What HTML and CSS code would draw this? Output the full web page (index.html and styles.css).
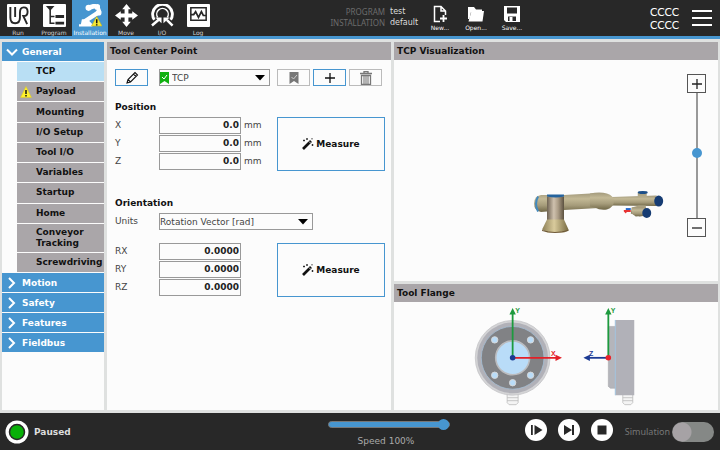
FILE: index.html
```html
<!DOCTYPE html>
<html lang="en">
<head>
<meta charset="utf-8">
<title>Installation - Tool Center Point</title>
<link rel="stylesheet" href="styles.css">
</head>
<body>
<header class="topbar">
  <nav class="tabs" aria-label="Main">
    <button class="tab"><svg class="tab-icon" viewBox="0 0 24 24"><rect width="24" height="24" rx="1" fill="#fff"/><path d="M3.500 3v11q0 6 5 6t5-6V9q0-5.500 4-5.500t4 4.500-4 4.500h-.5L21 21M8.500 3v10.500" fill="none" stroke="#282828" stroke-width="2"/></svg><span>Run</span></button>
    <button class="tab"><svg class="tab-icon" viewBox="0 0 24 24"><rect width="24" height="24" rx="1" fill="#fff"/><path d="M3 2h9L7.500 7z" fill="#282828"/><path d="M7.500 6v14H12M7.500 13H12" fill="none" stroke="#282828" stroke-width="1.600"/><path d="M13 11.500h9v3h-9zM13 18.500h9v3h-9z" fill="#282828"/></svg><span>Program</span></button>
    <button class="tab tab-active" aria-current="page"><svg class="tab-icon" viewBox="0 0 24 24"><path d="m10 4 8-2.500" stroke="#fff" stroke-width="5"/><path d="m19 2 2.500 6.500" stroke="#fff" stroke-width="4"/><path d="M20 9 6 18" stroke="#fff" stroke-width="4.500"/><circle cx="10" cy="4" r="3.200" fill="#fff"/><circle cx="19" cy="3" r="3" fill="#fff"/><circle cx="20.500" cy="9" r="3" fill="#fff"/><path d="M3 16h6l5 5v2.500H0V21h2z" fill="#fff"/><path d="M18.500 13 24 23H13z" fill="#f5e936" stroke="#c9b51b" stroke-width=".6"/><path d="M18.500 16v4M18.500 21v1.500" stroke="#111" stroke-width="1.600"/></svg><span>Installation</span></button>
    <button class="tab"><svg class="tab-icon" viewBox="0 0 24 24"><path d="m12 0 4.500 5.500H14V10h4V7.500L24 12l-6 4.500V14h-4v4.500h2.500L12 24l-4.500-5.500H10V14H6v2.500L0 12l6-4.500V10h4V5.500H7.500z" fill="#fff"/></svg><span>Move</span></button>
    <button class="tab"><svg class="tab-icon" viewBox="0 0 24 24"><path d="M3.500 16.500A10.300 10.300 0 1 1 20.500 16.500" fill="none" stroke="#fff" stroke-width="3"/><path d="M7 14a6 6 0 1 1 10 0" fill="none" stroke="#fff" stroke-width="1.500"/><path d="m1 22.500 7-6M16.500 16.500l6 6" stroke="#fff" stroke-width="2.600"/><path d="M4.500 14h6.500v6zM13 14h6.500L13 20z" fill="#fff"/></svg><span>I/O</span></button>
    <button class="tab"><svg class="tab-icon" viewBox="0 0 24 24"><rect width="24" height="24" rx="1" fill="#fff"/><path d="M4 4h16v13H4z" fill="none" stroke="#282828" stroke-width="1.600"/><path d="M4 11h3l2-3 3 6 3-6 2 4h3" fill="none" stroke="#282828" stroke-width="1.800"/></svg><span>Log</span></button>
  </nav>
  <dl class="files">
    <dt>PROGRAM</dt><dd>test</dd>
    <dt>INSTALLATION</dt><dd>default</dd>
  </dl>
  <div class="file-actions">
    <button class="file-button"><svg class="file-icon" viewBox="0 0 18 18"><path d="M9 16.500H3.500v-15H10l4.500 4.500v4M10 1.500V6h4.500" fill="none" stroke="#fff" stroke-width="1.500"/><path d="M12.500 10v7M9 13.500h7" stroke="#fff" stroke-width="1.800"/></svg><span>New...</span></button>
    <button class="file-button"><svg class="file-icon" viewBox="0 0 18 18"><path d="M1 2h6l2 2.500h6V7H4L2.500 14H1z" fill="#fff"/><path d="M4.500 6H17l-1.500 10.500h-14z" fill="#fff"/></svg><span>Open...</span></button>
    <button class="file-button"><svg class="file-icon" viewBox="0 0 18 18"><path d="M1 1h16v16H3l-2-2z" fill="#fff"/><path d="M4 2.500h10v6H4zM5 11.500h8V16H5z" fill="#282828"/><path d="M6.500 12h3v4h-3z" fill="#fff"/></svg><span>Save...</span></button>
  </div>
  <p class="checksum">CCCC<br>CCCC</p>
  <button class="menu-button" aria-label="Menu"><svg class="menu-icon" viewBox="0 0 20 18"><path d="M0 2h20M0 9h20M0 16h20" stroke="#fff" stroke-width="2"/></svg></button>
</header>

<main class="workspace">
  <nav class="sidebar" aria-label="Installation">
    <button class="group" aria-expanded="true"><svg class="chevron" viewBox="0 0 12 12"><path d="m1 3.500 5 5 5-5" fill="none" stroke="#fff" stroke-width="2"/></svg>General</button>
    <ul class="pages">
      <li class="page page-active"><a href="#tcp">TCP</a></li>
      <li class="page"><svg class="warning" viewBox="0 0 12 12"><path d="m6 .5 5.500 11H.5z" fill="#fff12a" stroke="#d8c832" stroke-width=".6"/><path d="M6 4v4M6 9v1.500" stroke="#111" stroke-width="1.500"/></svg><a href="#payload">Payload</a></li>
      <li class="page"><a href="#mounting">Mounting</a></li>
      <li class="page"><a href="#io">I/O Setup</a></li>
      <li class="page"><a href="#toolio">Tool I/O</a></li>
      <li class="page"><a href="#variables">Variables</a></li>
      <li class="page"><a href="#startup">Startup</a></li>
      <li class="page"><a href="#home">Home</a></li>
      <li class="page page-tall"><a href="#conveyor">Conveyor Tracking</a></li>
      <li class="page"><a href="#screwdriving">Screwdriving</a></li>
    </ul>
    <button class="group"><svg class="chevron" viewBox="0 0 12 12"><path d="m3 1 5 5-5 5" fill="none" stroke="#fff" stroke-width="2"/></svg>Motion</button>
    <button class="group"><svg class="chevron" viewBox="0 0 12 12"><path d="m3 1 5 5-5 5" fill="none" stroke="#fff" stroke-width="2"/></svg>Safety</button>
    <button class="group"><svg class="chevron" viewBox="0 0 12 12"><path d="m3 1 5 5-5 5" fill="none" stroke="#fff" stroke-width="2"/></svg>Features</button>
    <button class="group"><svg class="chevron" viewBox="0 0 12 12"><path d="m3 1 5 5-5 5" fill="none" stroke="#fff" stroke-width="2"/></svg>Fieldbus</button>
  </nav>

  <section class="panel">
    <h1 class="panel-title">Tool Center Point</h1>
    <form class="settings">
      <div class="toolbar">
        <button type="button" class="tool" aria-label="Rename"><svg class="tool-icon" viewBox="0 0 14 14"><path d="m2 12 1-3.500L10 1.500l2.500 2.500-7 7zM8.500 3 11 5.500M3 8.500 5.500 11" fill="none" stroke="#111" stroke-width="1.100"/></svg></button>
        <div class="select-box tcp-select">
          <svg class="flag" viewBox="0 0 9 12"><path d="M0 0h9v12L4.500 9 0 12z" fill="#10b010"/><path d="m2 5 2 2 3-4" fill="none" stroke="#fff"/></svg>
          <select aria-label="Active TCP"><option>TCP</option></select>
          <svg class="arrow" viewBox="0 0 10 6"><path d="M0 0h10L5 5.500z"/></svg>
        </div>
        <button type="button" class="tool" aria-label="Set as default" disabled><svg class="tool-icon" viewBox="0 0 14 14"><path d="M2.500 1h9v12L7 10l-4.500 3z" fill="#777"/><path d="m4.500 6 2 2 3.500-4" fill="none" stroke="#ccc"/></svg></button>
        <button type="button" class="tool" aria-label="Add TCP"><svg class="tool-icon" viewBox="0 0 14 14"><path d="M7 2v10M2 7h10" stroke="#111" stroke-width="1.300"/></svg></button>
        <button type="button" class="tool" aria-label="Delete TCP" disabled><svg class="tool-icon" viewBox="0 0 14 14"><path d="M1 2.500h12M5 2V.5h4V2M2.500 4.500h9v9h-9z" fill="none" stroke="#777" stroke-width="1.300"/><path d="M5 4v9M7 4v9M9 4v9" stroke="#777" stroke-width="1.100"/></svg></button>
      </div>

      <fieldset class="values">
        <legend>Position</legend>
        <div class="value-grid">
          <label for="x">X</label><span class="value"><input id="x" value="0.0"> mm</span>
          <label for="y">Y</label><span class="value"><input id="y" value="0.0"> mm</span>
          <label for="z">Z</label><span class="value"><input id="z" value="0.0"> mm</span>
          <button type="button" class="measure"><svg class="wand" viewBox="0 0 12 12"><path d="m1 11 8-8" stroke="#111" stroke-width="2.600"/><path d="m7 3.500 1.500 1.500" stroke="#fff" stroke-width=".8"/><path d="M2 1.500v2M1 2.500h2M5 0v2M4 1h2M10.500 6v2M9.500 7h2M10 0v1.500" stroke="#111" stroke-width=".8"/></svg>Measure</button>
        </div>
      </fieldset>

      <fieldset class="values orientation">
        <legend>Orientation</legend>
        <div class="units">
          <label for="units">Units</label>
          <div class="select-box units-select">
            <select id="units"><option>Rotation Vector [rad]</option></select>
            <svg class="arrow" viewBox="0 0 10 6"><path d="M0 0h10L5 5.500z"/></svg>
          </div>
        </div>
        <div class="value-grid">
          <label for="rx">RX</label><span class="value"><input id="rx" value="0.0000"></span>
          <label for="ry">RY</label><span class="value"><input id="ry" value="0.0000"></span>
          <label for="rz">RZ</label><span class="value"><input id="rz" value="0.0000"></span>
          <button type="button" class="measure"><svg class="wand" viewBox="0 0 12 12"><path d="m1 11 8-8" stroke="#111" stroke-width="2.600"/><path d="m7 3.500 1.500 1.500" stroke="#fff" stroke-width=".8"/><path d="M2 1.500v2M1 2.500h2M5 0v2M4 1h2M10.500 6v2M9.500 7h2M10 0v1.500" stroke="#111" stroke-width=".8"/></svg>Measure</button>
        </div>
      </fieldset>
    </form>
  </section>

  <div class="views">
    <section class="panel view">
      <h2 class="panel-title">TCP Visualization</h2>
      <div class="view-body">
        <svg class="drawing" viewBox="394 60 324 222" role="img" aria-label="Robot arm">
          <defs>
            <linearGradient id="tube" x2="0" y2="1"><stop stop-color="#a39a7c"/><stop offset=".3" stop-color="#c3b996"/><stop offset=".65" stop-color="#a59b7a"/><stop offset="1" stop-color="#706747"/></linearGradient>
            <linearGradient id="post"><stop stop-color="#6e6252"/><stop offset=".4" stop-color="#cfc1ae"/><stop offset=".65" stop-color="#ac9d87"/><stop offset="1" stop-color="#5c5140"/></linearGradient>
            <linearGradient id="foot"><stop stop-color="#8d8057"/><stop offset=".45" stop-color="#d9cb9c"/><stop offset="1" stop-color="#75683f"/></linearGradient>
          </defs>
          <path d="M541 195.500q-7 1-7 8.500t7 8.500l23-2 35-2v-15l-35 2z" fill="url(#tube)"/>
          <path d="M538 197q-4 7 0 15" fill="none" stroke="#4389bd" stroke-width="2"/>
          <path d="M612 197.500 657 196v10.500l-45-.5z" fill="url(#tube)"/>
          <path d="M590 194q10-2 17 0 7 2 7 8t-7 8q-7 1-12-2l-5-1z" fill="url(#tube)"/>
          <path d="M638 193h9v5h-9zM639 206h7l1 10-7 1-9-3 1-6z" fill="url(#tube)"/>
          <path d="M632 208h14v8l-10 1-4-3z" fill="url(#tube)"/>
          <ellipse cx="643" cy="193" rx="5" ry="1.500" fill="#1d4f88"/>
          <ellipse cx="659" cy="201.500" rx="4.500" ry="5.500" fill="#163c73"/>
          <ellipse cx="647" cy="213.500" rx="4.500" ry="5" fill="#163c73"/>
          <path d="M547 197h17v24h-17z" fill="url(#post)"/>
          <path d="M547 220h17l5 11-5 2h-17l-5-3z" fill="url(#foot)"/>
          <path d="M542 231q13 4 26 0" fill="none" stroke="#6c5636"/>
          <path d="M547 195h17v2q-8 2-17 0z" fill="#25639d"/>
          <path d="M626 209.500h5" stroke="#26c" stroke-width="2"/>
          <path d="M624 210.500h7v2h-4l-1 1.500-2-2z" fill="#e83232"/>
        </svg>
        <div class="zoom">
          <button aria-label="Zoom in"><svg viewBox="0 0 12 12"><path d="M6 1v10M1 6h10" stroke="#222" stroke-width="1.300"/></svg></button>
          <input type="range" class="zoom-range" aria-label="Zoom" min="0" max="100" value="52">
          <button aria-label="Zoom out"><svg viewBox="0 0 12 12"><path d="M1 6h10" stroke="#222" stroke-width="1.300"/></svg></button>
        </div>
      </div>
    </section>
    <section class="panel flange">
      <h2 class="panel-title">Tool Flange</h2>
      <div class="view-body">
        <svg class="drawing" viewBox="394 303 324 108" role="img" aria-label="Tool flange axes">
          <path d="M507 395h11v9l-2 2h-7l-2-2zM507 399h11M507 402h11M623 395h10v9l-2 2h-6l-2-2zM623 399h10M623 402h10" fill="#f4f4f4" stroke="#bbb" stroke-width=".8"/>
          <circle cx="512.500" cy="359" r="37.500" fill="#d4d4d6" stroke="#c0c0c2" stroke-width=".7"/>
          <circle cx="512.500" cy="359" r="35.500" fill="#b1b1b8"/>
          <circle cx="512.500" cy="359" r="31.500" fill="#818285" stroke="#a4bed4" stroke-width=".8"/>
          <circle cx="512.500" cy="359" r="17" fill="#b9dcf8" stroke="#bbbcbf" stroke-width="1.600"/>
          <g fill="#b9dcf8" stroke="#d5d7d9"><circle cx="494.500" cy="341" r="3.200"/><circle cx="530.500" cy="341" r="3.200"/><circle cx="494.500" cy="376.500" r="3.200"/><circle cx="530.500" cy="376.500" r="3.200"/><circle cx="512.500" cy="384" r="3.200"/></g>
          <path d="M608.500 327.500h8v62h-6l-2-2z" fill="#b4b5bb" stroke="#a7a8ac" stroke-width=".6"/>
          <path d="M615.500 321h19v75.500h-19z" fill="#b1b1b8"/><path d="M615.500 321v75.500" stroke="#a3c4df"/>
          <g stroke-width="1.800"><path d="M512.500 358V314M608.500 358V314" stroke="#1d9a3e"/><path d="M513 359h45" stroke="#e31f27"/><path d="M608 359h-20" stroke="#1b3a93"/></g>
          <path d="m512.500 309 3.200 6.500h-6.400zM608.500 309l3.200 6.500h-6.400z" fill="#1d9a3e"/>
          <path d="m562 359-6.500 3.200v-6.400z" fill="#e31f27"/><path d="m583.500 359 6.500 3.200v-6.400z" fill="#1b3a93"/>
          <circle cx="512.500" cy="359" r="2.800" fill="#1b3a93"/><circle cx="608.500" cy="359" r="2.800" fill="#e8232b"/>
          <g class="axis"><text x="515" y="314" fill="#1d9a3e">Y</text><text x="611" y="314" fill="#1d9a3e">Y</text><text x="551" y="357" fill="#e31f27">X</text><text x="589" y="357" fill="#1b3a93">Z</text></g>
        </svg>
      </div>
    </section>
  </div>
</main>

<footer class="bottombar">
  <div class="status"><svg class="status-icon" viewBox="0 0 24 24"><circle cx="12" cy="12" r="11.500" fill="#fff"/><circle cx="12" cy="12" r="7.500" fill="#08b008" stroke="#282828" stroke-width="1.500"/></svg>Paused</div>
  <div class="speed"><input type="range" id="speed" class="speed-range" value="100"><label for="speed">Speed 100%</label></div>
  <div class="playback">
    <button aria-label="Play"><svg viewBox="0 0 22 22"><circle cx="11" cy="11" r="11" fill="#fff"/><path d="M6 6h1.800v10H6zM9.500 6l8 5-8 5z" fill="#282828"/></svg></button>
    <button aria-label="Step"><svg viewBox="0 0 22 22"><circle cx="11" cy="11" r="11" fill="#fff"/><path d="m6 6 8 5-8 5zM14 6h2v10h-2z" fill="#282828"/></svg></button>
    <button aria-label="Stop"><svg viewBox="0 0 22 22"><circle cx="11" cy="11" r="11" fill="#fff"/><path d="M6.500 6.500h9v9h-9z" fill="#282828"/></svg></button>
  </div>
  <label class="simulation">Simulation <input type="checkbox" class="switch"></label>
</footer>
</body>
</html>
```
FILE: styles.css
```css
* { box-sizing: border-box; }

body {
  margin: 0;
  min-height: 100vh;
  display: flex;
  flex-direction: column;
  background: #dfe1e0;
  color: #111;
  font: 9px/14px "DejaVu Sans", "Noto Sans", sans-serif;
}

button, input, select { font: inherit; color: inherit; margin: 0; padding: 0; }
button { border: 0; background: none; }
svg { display: block; flex: none; }

/* Top bar */
.topbar {
  height: 39px;
  display: flex;
  align-items: stretch;
  background: #282828;
  border-bottom: 3px solid #4796d0;
  color: #fff;
}
.tabs { display: flex; }
.tab {
  width: 36px;
  padding-top: 4px;
  display: flex;
  flex-direction: column;
  align-items: center;
  gap: 2px;
  color: #d0d0d0;
  font-size: 6px;
  line-height: 8px;
}
.tab-active { background: #4796d0; color: #fff; }
.tab-icon { width: 23px; height: 23px; }
.files {
  width: 206px;
  margin: 6px 0 0;
  display: grid;
  grid-template-columns: 1fr 32px;
  align-content: start;
  column-gap: 5px;
  font-size: 8px;
  line-height: 11px;
}
.files dt { text-align: right; color: #6c6c6c; font-family: "Noto Sans", sans-serif; }
.files dd { margin: 0; color: #ddd; }
.file-actions { display: flex; }
.file-button {
  width: 36px;
  padding-top: 5px;
  display: flex;
  flex-direction: column;
  align-items: center;
  gap: 1px;
  font-size: 6px;
  line-height: 8px;
}
.file-icon { width: 18px; height: 18px; }
.checksum { margin: 5px 13px 0 auto; font: 11px/13px Lato, sans-serif; }
.menu-button { margin-right: 8px; }
.menu-icon { width: 20px; height: 18px; }

/* Workspace */
.workspace {
  flex: 1;
  display: grid;
  grid-template-columns: 102px minmax(0, 284fr) minmax(0, 324fr);
  gap: 3px;
  padding: 3px 2px;
}
.sidebar, .panel { background: #fcfcfc; }
.sidebar { display: flex; flex-direction: column; gap: 1px; }
.group {
  height: 19px;
  padding-left: 4px;
  display: flex;
  align-items: center;
  gap: 4px;
  background: #4796d0;
  color: #fff;
}
.chevron { width: 12px; height: 12px; }
.pages {
  height: 210px;
  margin: 0 0 0 15px;
  padding: 0;
  display: flex;
  flex-direction: column;
  gap: 1px;
  list-style: none;
}
.page {
  flex: 1;
  padding-left: 19px;
  display: flex;
  align-items: center;
  position: relative;
  background: #aaa6a9;
  line-height: 11px;
}
.page-tall { flex: 0 0 28px; }
.page-active { background: #b9dff4; }
.page a { color: inherit; text-decoration: none; }
.group, .page, .panel-title, legend, .measure, .value input { font-weight: bold; }
.warning { position: absolute; left: 3px; width: 12px; height: 12px; }
.panel-title {
  height: 18px;
  margin: 0;
  padding-left: 3px;
  background: #aaa6a9;
  font-size: 9px;
  line-height: 18px;
}

/* Settings form */
.settings { padding: 9px 6px 0 8px; color: #444; }
.toolbar { display: flex; gap: 3px; }
.tool {
  width: 33px;
  height: 17px;
  display: grid;
  place-items: center;
  border: 1px solid #4796d0;
}
.tool:disabled { border-color: #bbb; }
.tool-icon { width: 14px; height: 14px; }
.select-box {
  height: 17px;
  display: flex;
  align-items: center;
  position: relative;
  border: 1px solid #999;
}
.select-box select {
  flex: 1;
  height: 15px;
  appearance: none;
  border: 0;
  background: none;
}
.arrow { position: absolute; right: 4px; width: 10px; height: 6px; pointer-events: none; }
.tcp-select { width: 111px; margin: 0 4px 0 8px; gap: 3px; }
.flag { width: 9px; height: 12px; }
.values { min-width: 0; margin: 14px 0 0; padding: 0; border: 0; }
.orientation { margin-top: 25px; }
legend { height: 17px; padding: 0; color: #111; }
.value-grid {
  display: grid;
  grid-template-columns: 44px 118px minmax(0, 108px);
  grid-auto-rows: 18px;
  line-height: 17px;
}
.value { display: flex; gap: 3px; }
.value input {
  width: 82px;
  height: 17px;
  padding-right: 1px;
  border: 1px solid #999;
  background: none;
  color: #222;
  text-align: right;
}
.measure {
  grid-column: 3;
  grid-row: 1 / span 3;
  display: flex;
  align-items: center;
  justify-content: center;
  gap: 2px;
  border: 1px solid #4796d0;
  color: #111;
}
.wand { width: 12px; height: 12px; }
.units { margin-bottom: 13px; display: grid; grid-template-columns: 44px 154px; line-height: 17px; }

/* Views */
.views { display: grid; grid-template-rows: minmax(0, 240fr) minmax(0, 126fr); gap: 3px; }
.view, .flange { display: flex; flex-direction: column; }
.view-body { flex: 1; position: relative; }
.drawing { position: absolute; inset: 0; width: 100%; height: 100%; }
.zoom {
  width: 19px;
  margin: 14px 12px 0 auto;
  display: flex;
  flex-direction: column;
  align-items: center;
  position: relative;
}
.zoom button {
  width: 19px;
  height: 19px;
  display: grid;
  place-items: center;
  border: 1px solid #555;
}
.zoom svg { width: 12px; height: 12px; }
.zoom-range {
  width: 10px;
  height: 125px;
  appearance: none;
  writing-mode: vertical-lr;
  direction: rtl;
  background: linear-gradient(#999, #999) center / 2px 100% no-repeat;
}
.zoom-range::-webkit-slider-thumb {
  width: 10px;
  height: 10px;
  appearance: none;
  border-radius: 50%;
  background: #4796d0;
}
.axis { font: bold 7px/8px "Liberation Sans", sans-serif; }

/* Bottom bar */
.bottombar {
  height: 37px;
  padding: 0 6px 0 5px;
  display: flex;
  align-items: center;
  background: #282828;
  color: #ddd;
}
.status {
  width: 323px;
  display: flex;
  align-items: center;
  gap: 5px;
  font-weight: bold;
}
.status-icon { width: 24px; height: 24px; }
.speed {
  width: 122px;
  padding-top: 3px;
  display: flex;
  flex-direction: column;
  align-items: center;
  gap: 5px;
  color: #aaa;
  line-height: 12px;
}
.speed label { padding-right: 6px; }
.speed-range {
  width: 100%;
  height: 11px;
  appearance: none;
  background: none;
}
.speed-range::-webkit-slider-runnable-track {
  height: 7px;
  border: 1px solid #777;
  border-radius: 4px;
  background: #4796d0;
}
.speed-range::-webkit-slider-thumb {
  width: 11px;
  height: 11px;
  margin-top: -3px;
  appearance: none;
  border-radius: 50%;
  background: #4796d0;
}
.playback { margin-left: auto; padding-bottom: 3px; display: flex; gap: 11px; }
.playback svg { width: 22px; height: 22px; }
.simulation {
  margin-left: 12px;
  display: flex;
  align-items: center;
  gap: 2px;
  color: #777;
  font: 9px/12px "Noto Sans", sans-serif;
}
.switch {
  width: 42px;
  height: 20px;
  appearance: none;
  border-radius: 10px;
  background: radial-gradient(circle at 10px 10px, #a6a2a5 9px, #858886 10px);
}
```
